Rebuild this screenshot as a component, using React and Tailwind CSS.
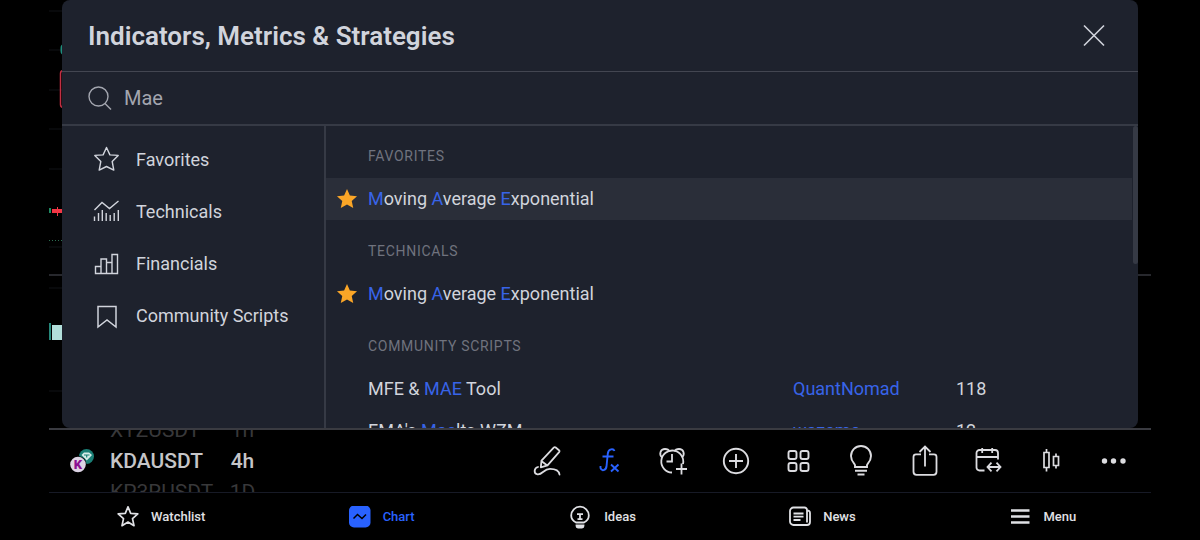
import { useState } from 'react'

const STAR = 'M14 3.2l3.1 7 7.7.8-5.7 5.2 1.6 7.6-6.7-3.9-6.7 3.9 1.6-7.6L3.2 11l7.7-.8z'

const categories = [
  { label: 'Favorites', icon: FavoritesIcon },
  { label: 'Technicals', icon: TechnicalsIcon },
  { label: 'Financials', icon: FinancialsIcon },
  { label: 'Community Scripts', icon: BookmarkIcon },
]

// "*" wraps the matched part of a name
const sections = [
  {
    title: 'Favorites',
    rows: [{ name: '*M*oving *A*verage *E*xponential', starred: true, active: true }],
  },
  {
    title: 'Technicals',
    rows: [{ name: '*M*oving *A*verage *E*xponential', starred: true }],
  },
  {
    title: 'Community Scripts',
    rows: [
      { name: 'MFE & *MAE* Tool', author: 'QuantNomad', likes: 118 },
      { name: "EMA's *Mae*lts WZM", author: 'wazeme', likes: 12 },
    ],
  },
]

const tools = [
  { label: 'Draw', icon: DrawIcon },
  { label: 'Indicators', icon: FxIcon, active: true },
  { label: 'Add alert', icon: AlarmIcon },
  { label: 'Add symbol', icon: PlusIcon },
  { label: 'Layouts', icon: GridIcon },
  { label: 'Publish idea', icon: BulbIcon },
  { label: 'Share', icon: ShareIcon },
  { label: 'Go to date', icon: CalendarIcon },
  { label: 'Chart type', icon: CandlesIcon },
  { label: 'More', icon: DotsIcon },
]

const tabs = [
  { label: 'Watchlist', icon: WatchlistIcon },
  { label: 'Chart', icon: ChartIcon, active: true },
  { label: 'Ideas', icon: IdeasIcon },
  { label: 'News', icon: NewsIcon },
  { label: 'Menu', icon: MenuIcon },
]

function Icon({ size, width, children }) {
  return (
    <svg
      width={size}
      height={size}
      viewBox={`0 0 ${size} ${size}`}
      fill="none"
      stroke="currentColor"
      strokeWidth={width}
      className="shrink-0"
      aria-hidden="true"
    >
      {children}
    </svg>
  )
}

function FavoritesIcon() {
  return (
    <Icon size={28} width={1.4}>
      <path strokeLinejoin="round" d="M14.5 1.5l3.4 7.4 8.300.5-6 6.100 1.600 8.600-7.300-3.600-7.300 3.600 1.600-8.600-6-6.100 8.300-.5z" />
    </Icon>
  )
}

function TechnicalsIcon() {
  return (
    <Icon size={28} width={1.4}>
      <path d="M2.500 12l7.500-7.500 7.500 6 9-7.500M2.500 23v-4.500M6.500 23v-8M10.300 23v-11M14.200 23v-8M18.200 23v-6M22.200 23v-8M26.300 23v-11" />
    </Icon>
  )
}

function FinancialsIcon() {
  return (
    <Icon size={28} width={1.4}>
      <path d="M3.500 23.500v-7h5.500v7zM9 23.500v-14.500h5.500v14.500zM14.500 23.500v-11h5.500v11zM20 23.500v-19h5.500v19z" />
    </Icon>
  )
}

function BookmarkIcon() {
  return (
    <Icon size={28} width={1.5}>
      <path d="M6 4.500h18v20.500l-9-7-9 7z" />
    </Icon>
  )
}

function DrawIcon() {
  return (
    <Icon size={32} width={1.8}>
      <path
        strokeLinejoin="round"
        strokeLinecap="round"
        d="M22.700 2.700q1-1 2-.2l3.300 2.700q1 .8.1 1.900l-11.600 13.200-6.700 2 .7-6.600zM10.300 16l6 4.500M7 22c-4 1-4.500 6-1 7.200 5 1.500 6.500-5.400 13-5.400 5 0 9 2 9.500 5.700"
      />
    </Icon>
  )
}

function FxIcon() {
  return (
    <Icon size={32} width={1.9}>
      <path d="M20.500 6c-1-2.500-6-2.500-6.700 2.500l-1.300 13c-.6 4-5 5-6 1.500v-2M8.500 11.500h11M17 19.500l7.500 7M24.500 19.500l-7.500 7" />
    </Icon>
  )
}

function AlarmIcon() {
  return (
    <Icon size={32} width={1.8}>
      <path d="M15 27.500a11 11 0 1 1 11-8.500M15 9v7.500h-5.500M24.500 18.500v11M19 24h11" />
      <path d="M5.200 12.500C1.500 9 3.500 4 8 4c2.500 0 4 1.300 4.500 2.500M24.800 12.500c3.700-3.500 1.700-8.500-2.800-8.500-2.500 0-4 1.300-4.500 2.500" />
    </Icon>
  )
}

function PlusIcon() {
  return (
    <Icon size={32} width={1.9}>
      <circle cx="16" cy="16" r="12.200" />
      <path d="M16 9v14M9 16h14" />
    </Icon>
  )
}

function GridIcon() {
  return (
    <Icon size={32} width={1.9}>
      <rect x="5.500" y="6" width="8" height="8" rx="2" />
      <rect x="17.500" y="6" width="8" height="8" rx="2" />
      <rect x="5.500" y="18" width="8" height="8" rx="2" />
      <rect x="17.500" y="18" width="8" height="8" rx="2" />
    </Icon>
  )
}

function BulbIcon() {
  return (
    <Icon size={32} width={1.9}>
      <path d="M9 22h12v-2c0-1 4-3.500 4-9a10 10 0 0 0-20 0c0 5.500 4 8 4 9zM9 25.800h12M11.500 29.500h7" />
    </Icon>
  )
}

function ShareIcon() {
  return (
    <Icon size={32} width={1.8}>
      <path d="M12 9.300h-5a2.500 2.500 0 0 0-2.500 2.500v15a3 3 0 0 0 3 3h17a3 3 0 0 0 3-3v-15a2.500 2.500 0 0 0-2.500-2.500h-5M16 21.500v-20M10.500 7l5.500-5.500 5.500 5.500" />
    </Icon>
  )
}

function CalendarIcon() {
  return (
    <Icon size={32} width={1.8}>
      <path d="M12.500 25.500h-5a3 3 0 0 1-3-3v-14.500a3 3 0 0 1 3-3h15.500a3 3 0 0 1 3 3v6.500M4.500 12h21.500M10.200 3v5M20.200 3v5M16 22h12M19.500 17.700l-4 4.300 4 4.300M24.500 17.700l4 4.300-4 4.300" />
    </Icon>
  )
}

function CandlesIcon() {
  return (
    <Icon size={32} width={1.7}>
      <path d="M9 7.500h5v15h-5zM11.500 4v3.500M11.500 22.500v4M18.500 11.500h5v9h-5zM21 8.500v3M21 20.500v3" />
    </Icon>
  )
}

function DotsIcon() {
  return (
    <Icon size={32} width={0}>
      <g fill="currentColor">
        <circle cx="6.500" cy="16" r="2.700" />
        <circle cx="15.500" cy="16" r="2.700" />
        <circle cx="25" cy="16" r="2.700" />
      </g>
    </Icon>
  )
}

function WatchlistIcon() {
  return (
    <Icon size={22} width={1.7}>
      <path strokeLinejoin="round" d="M11 .8l2.700 6.500 7.100.6-5.300 4.700 1.500 7.100-6-3.700-6 3.700 1.500-7.100L1.200 7.900l7.100-.6z" />
    </Icon>
  )
}

function ChartIcon() {
  return (
    <Icon size={22} width={1.5}>
      <rect y="-.5" width="21.500" height="22" rx="5" fill="currentColor" stroke="none" />
      <path stroke="#000" d="M4.500 12.500l4-4 4.500 4 4-4" />
    </Icon>
  )
}

function IdeasIcon() {
  return (
    <Icon size={24} width={1.8}>
      <path d="M8 17.500c-3-1.500-4.800-4-4.800-7a8.800 8.800 0 0 1 17.600 0c0 3-1.800 5.500-4.800 7z" />
      <path d="M8.500 20.500v.5q0 1.500 1.500 1.500h4q1.500 0 1.500-1.500v-.5zM9 9.200h6M12 9.200v5M9.500 14.200h5" />
    </Icon>
  )
}

function NewsIcon() {
  return (
    <Icon size={22} width={1.8}>
      <path d="M18 5v-1a2.500 2.500 0 0 0-2.500-2.500h-11a3.500 3.500 0 0 0-3.500 3.500v10.500a3.500 3.500 0 0 0 3.500 3.500h13.500a3 3 0 0 0 3-3v-9a2.500 2.500 0 0 0-2.500-2.500M18 4v12.500M4.500 7.500h10M4.500 10.700h10M4.500 14h7" />
    </Icon>
  )
}

function MenuIcon() {
  return (
    <Icon size={22} width={2.4}>
      <path d="M2 4.500h18.500M2 10.500h18.500M2 16.500h18.500" />
    </Icon>
  )
}

function PairLogo() {
  return (
    <svg width="26" height="26" viewBox="0 0 26 26" className="shrink-0" aria-hidden="true">
      <circle cx="16.500" cy="8.500" r="7.500" fill="#1a7f76" />
      <path d="M11.500 7l2.500-2.500h5l3 2.500-5.200 5.500z" fill="#d5ece9" />
      <path d="M14 7h5.500M16.700 6.500v3" stroke="#1a7f76" strokeWidth="1.200" />
      <circle cx="8" cy="16.500" r="8.600" fill="#000" />
      <circle cx="8" cy="16.500" r="7.800" fill="#dcd3e4" />
      <text x="8" y="21.300" textAnchor="middle" fontSize="13" fontWeight="900" fill="#8c0f92">K</text>
    </svg>
  )
}

function ChartBackdrop() {
  return (
    <svg className="absolute inset-0 w-full h-full" aria-hidden="true">
      {[11, 50, 90, 129, 169, 247, 288, 391].map((y) => (
        <line key={y} x1="0" x2="13" y1={y} y2={y} stroke="#111317" />
      ))}
      <rect x="11.500" y="44" width="20" height="11" rx="4" fill="#1d8d7d" />
      <rect x="11.500" y="70.500" width="20" height="37" rx="3" fill="none" stroke="#c22f43" strokeWidth="1.500" />
      <rect x="0" y="208" width="2" height="5" fill="#1f8a63" />
      <rect x="3" y="209" width="11" height="4" fill="#f23645" />
      <rect x="8" y="207" width="1" height="9" fill="#f23645" />
      <line x1="0" x2="13" y1="240.500" y2="240.500" stroke="#2c6f52" strokeDasharray="1 2" />
      <line x1="0" x2="100%" y1="275" y2="275" stroke="#34363d" strokeWidth="1.500" />
      <rect x="0" y="323" width="2" height="17" fill="#26877a" />
      <rect x="3" y="325" width="12" height="15" fill="#b2dfdb" />
    </svg>
  )
}

function Highlighted({ text }) {
  return text.split('*').map((part, i) =>
    i % 2 ? <span key={i} className="text-[#3864e8]">{part}</span> : part
  )
}

function ResultRow({ row }) {
  return (
    <li
      className={`grid grid-cols-[42px_1fr_163px_176px] items-center h-[42px] text-lg ${
        row.active ? 'bg-[#2a2e39]' : ''
      }`}
    >
      {row.starred ? (
        <button type="button" aria-label="Remove from favorites" className="flex justify-center text-[#fba627]">
          <svg width="26" height="26" viewBox="0 0 28 28" fill="currentColor" aria-hidden="true">
            <path d={STAR} />
          </svg>
        </button>
      ) : (
        <span />
      )}
      <span className="truncate">
        <Highlighted text={row.name} />
      </span>
      {row.author && (
        <>
          <a href="#author" className="text-[#3864e8]">{row.author}</a>
          <span>{row.likes}</span>
        </>
      )}
    </li>
  )
}

function IndicatorsDialog() {
  const [query, setQuery] = useState('Mae')

  return (
    <div
      role="dialog"
      aria-labelledby="dialog-title"
      className="relative h-full flex flex-col rounded-lg overflow-hidden bg-[#1e222d] text-[#d1d4dc]"
    >
      <header className="flex items-center justify-between h-[72px] shrink-0 pl-[26px] pr-8 border-b border-[#434651]">
        <h1 id="dialog-title" className="text-[26px] leading-8 font-semibold">Indicators, Metrics &amp; Strategies</h1>
        <button type="button" aria-label="Close">
          <svg width="26" height="26" viewBox="0 0 26 26" stroke="currentColor" strokeWidth="1.600" aria-hidden="true">
            <path d="M4 2.500l20 20M24 2.500L4 22.500" />
          </svg>
        </button>
      </header>

      <label className="flex items-center gap-3 h-[54px] shrink-0 px-[26px] border-b-2 border-[#363a45] text-[#a3a6af]">
        <svg width="24" height="24" viewBox="0 0 24 24" fill="none" stroke="currentColor" strokeWidth="1.400" aria-hidden="true">
          <circle cx="10.500" cy="10.500" r="9.500" />
          <path d="M17 17.500l6 6" />
        </svg>
        <input
          type="text"
          aria-label="Search"
          value={query}
          onChange={(e) => setQuery(e.target.value)}
          className="flex-1 bg-transparent outline-none text-xl"
        />
      </label>

      <div className="flex flex-1 min-h-0">
        <nav className="w-[264px] shrink-0 pt-2 border-r-2 border-[#363a45]">
          {categories.map(({ label, icon: CategoryIcon }) => (
            <button key={label} type="button" className="flex items-center gap-4 w-full h-13 pl-[30px] text-lg text-left">
              <CategoryIcon />
              {label}
            </button>
          ))}
        </nav>

        <div className="flex-1 min-w-0 space-y-px overflow-hidden">
          {sections.map((section) => (
            <section key={section.title}>
              <h2 className="flex items-center h-13 pt-2 pl-[42px] text-sm tracking-wider uppercase text-[#70737e]">
                {section.title}
              </h2>
              <ul>
                {section.rows.map((row) => (
                  <ResultRow key={row.name} row={row} />
                ))}
              </ul>
            </section>
          ))}
        </div>
        <div className="w-[5px] h-[138px] ml-px rounded-sm bg-[#363a45]" />
      </div>
    </div>
  )
}

// Three stacked values, only the middle one is fully visible
function Picker({ values, className }) {
  return (
    <div className={`flex flex-col text-[21px] leading-[31px] ${className}`}>
      {values.map((value, i) => (
        <span key={value} className={i === 1 ? 'font-medium text-[#c5c5c8]' : 'text-[#38383a]'}>
          {value}
        </span>
      ))}
    </div>
  )
}

export default function App() {
  return (
    <div className="h-screen flex flex-col px-[49px] overflow-hidden bg-black font-[Roboto,sans-serif]">
      <main className="relative flex-1 min-h-0 px-[13px] border-b-2 border-[#3a3b41]">
        <ChartBackdrop />
        <IndicatorsDialog />
      </main>

      <div className="flex items-center justify-between h-[63px] shrink-0 pl-[21px] pr-[6px] overflow-hidden border-b border-[#171a26]">
        <div className="flex items-center">
          <PairLogo />
          <Picker values={['XTZUSDT', 'KDAUSDT', 'KP3RUSDT']} className="w-[120px] pl-[14px]" />
          <Picker values={['1h', '4h', '1D']} className="w-[53px] items-center" />
        </div>
        <div className="flex">
          {tools.map(({ label, icon: ToolIcon, active }) => (
            <button
              key={label}
              type="button"
              aria-label={label}
              className={`flex justify-center w-[63px] ${active ? 'text-[#2962ff]' : 'text-[#dcdce0]'}`}
            >
              <ToolIcon />
            </button>
          ))}
        </div>
      </div>

      <nav className="flex h-[47px] shrink-0 pl-0.5 -mr-0.5">
        {tabs.map(({ label, icon: TabIcon, active }) => (
          <a
            key={label}
            href={`#${label.toLowerCase()}`}
            aria-current={active ? 'page' : undefined}
            className={`flex flex-1 items-center justify-center gap-3 text-[13px] font-medium ${
              active ? 'text-[#2962ff]' : 'text-[#e0e1e5]'
            }`}
          >
            <TabIcon />
            {label}
          </a>
        ))}
      </nav>
    </div>
  )
}
